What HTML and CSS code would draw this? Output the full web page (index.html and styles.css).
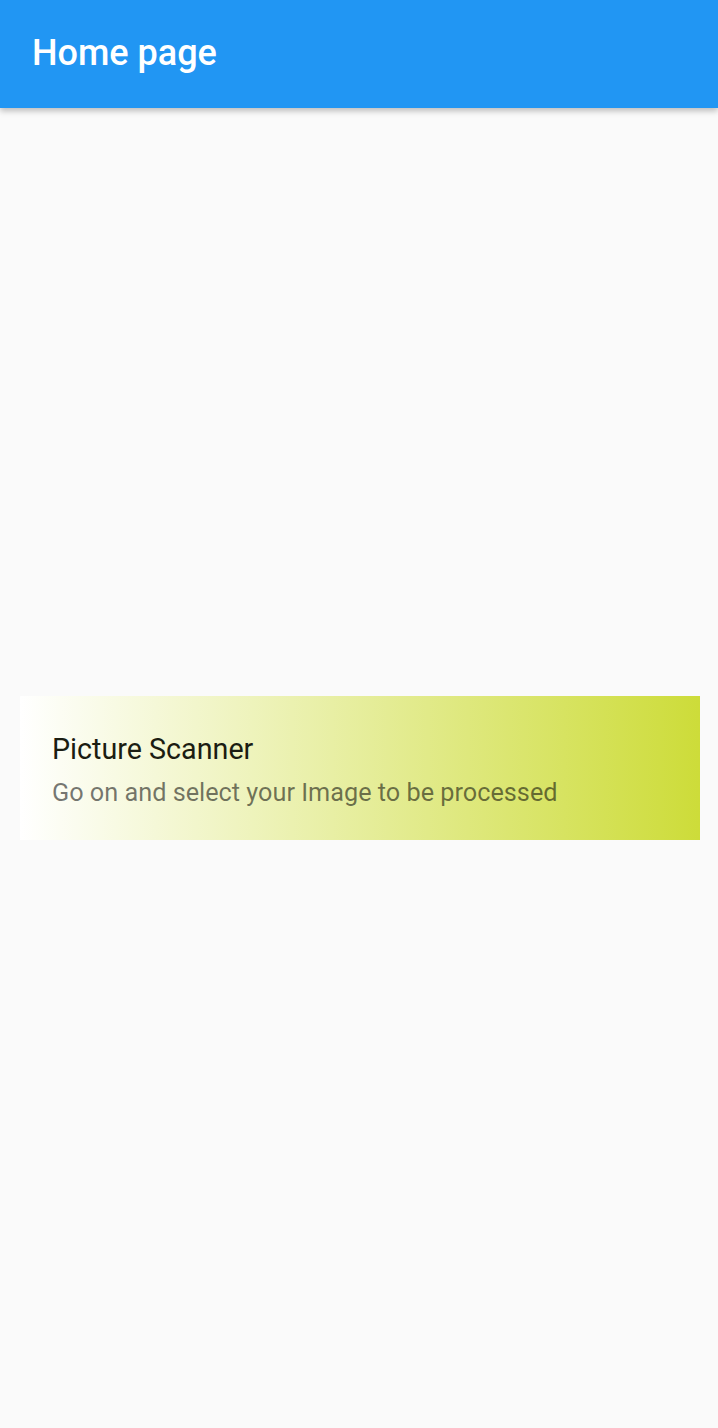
FILE: index.html
```html
<!DOCTYPE html>
<html>
<head>
<meta charset="utf-8">
<link rel="stylesheet" href="styles.css">
</head>
<body>
<header class="appbar"><h1 class="title">Home page</h1></header>
<main class="content">
  <div class="card">
    <div class="card-title">Picture Scanner</div>
    <div class="card-sub">Go on and select your Image to be processed</div>
  </div>
</main>
</body>
</html>
```
FILE: styles.css
```css
html, body { margin: 0; padding: 0; }
body {
  background: #fafafa;
  font-family: Roboto, "Noto Sans", sans-serif;
  width: 718px;
  height: 1428px;
  overflow: hidden;
}
.appbar {
  height: 108px;
  background: #2196f3;
  display: flex;
  align-items: center;
  padding-left: 32px;
  box-shadow: 0 3px 6px rgba(0,0,0,0.25);
  position: relative;
  z-index: 1;
}
.title {
  margin: 0;
  color: #fff;
  font-size: 36px;
  font-weight: 500;
  line-height: 40px;
  margin-top: -2px;
}
.content {
  height: 1320px;
  display: flex;
  align-items: center;
  padding-left: 20px;
}
.card {
  width: 680px;
  height: 144px;
  box-sizing: border-box;
  padding: 33px 32px 0 32px;
  background: linear-gradient(to right, #ffffff, #cddc39);
  display: flex;
  flex-direction: column;
}
.card-title {
  font-size: 28.7px;
  color: #1b1d12;
  line-height: 40px;
}
.card-sub {
  font-size: 25.25px;
  color: rgba(0,0,0,0.54);
  line-height: 32px;
  margin-top: 8px;
}
```
